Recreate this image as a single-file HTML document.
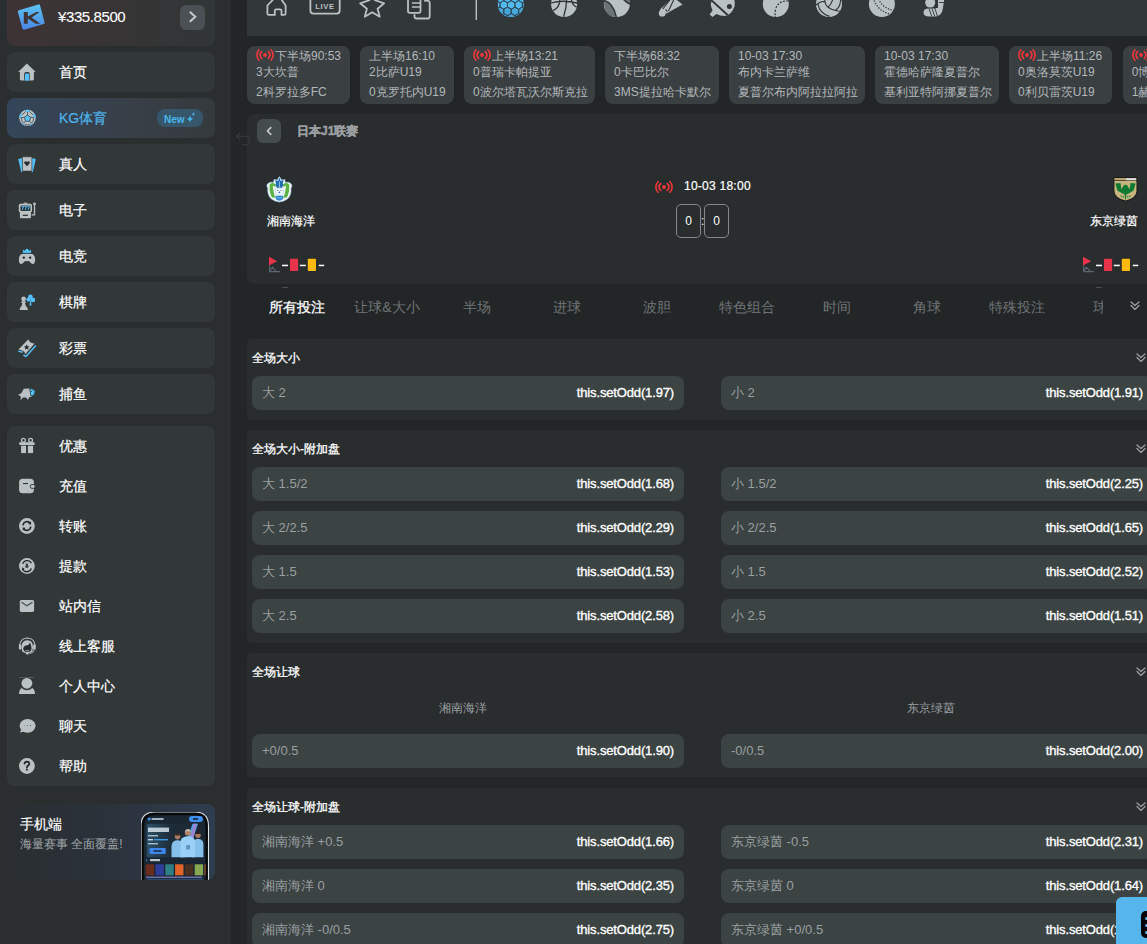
<!DOCTYPE html>
<html><head><meta charset="utf-8"><style>
*{box-sizing:border-box;margin:0;padding:0}
html,body{width:1147px;height:944px;overflow:hidden}
body{position:relative;background:#222627;font-family:"Liberation Sans",sans-serif;color:#fff}
.a{position:absolute}
#side{left:0;top:0;width:231px;height:944px;background:#2a2e2f}
.card{position:absolute;left:7px;width:208px;background:#323738;border-radius:8px;overflow:hidden}
.mi{position:absolute;left:7px;width:208px;height:40px;background:#323738;border-radius:8px}
.mi .t,.gi .t{position:absolute;left:52px;top:11px;font-size:14px;line-height:18px;color:#fff;white-space:nowrap;-webkit-text-stroke:0.2px currentColor}
.ic{position:absolute;left:11px;top:11px;width:18px;height:18px}
.gi{position:absolute;left:0;width:208px;height:40px}
.mc{position:absolute;top:46px;height:58px;background:#3a3f42;border-radius:8px;color:#b3b8ba;font-size:12px;line-height:16px;white-space:nowrap;overflow:hidden}
.mc div{position:absolute;left:9px}
.mc .l1{top:49px}
.mc .l1{top:2px} .mc .l2{top:18px} .mc .l3{top:37.5px}
.mc svg.live{display:inline-block;vertical-align:top;margin:1px 1px 0 0}
.panel{position:absolute;left:247px;width:930px;background:#292d2e;border-radius:8px}
.sec{position:absolute;left:247px;width:916px;background:#292d2e;border-radius:5px}
.sec .tt{position:absolute;left:5px;top:12px;font-size:12px;line-height:14px;color:#fff;-webkit-text-stroke:0.3px #fff}
.chev{position:absolute;width:10px;height:9px}
.btn{position:absolute;height:34px;width:432px;background:#3b4343;border-radius:8px;font-size:13px;line-height:34px;white-space:nowrap}
.btn .k{position:absolute;left:10px;top:0;color:#9a9fa1}
.btn .v{position:absolute;right:10px;top:0;color:#fff;font-size:13px;letter-spacing:-0.15px;-webkit-text-stroke:0.35px #fff}
.tab{position:absolute;top:299px;width:90px;text-align:center;font-size:14px;line-height:16px;color:#707476;white-space:nowrap}
</style></head><body>
<svg width="0" height="0" style="position:absolute"><defs>
<g id="liveic"><circle cx="9" cy="6" r="1.9" fill="#f0383a"/>
<path d="M5.6 2.6a4.6 4.6 0 0 0 0 6.8M12.4 2.6a4.6 4.6 0 0 1 0 6.8" stroke="#f0383a" stroke-width="1.8" fill="none" stroke-linecap="round"/>
<path d="M3 0.8a7.5 7.5 0 0 0 0 10.4M15 0.8a7.5 7.5 0 0 1 0 10.4" stroke="#f0383a" stroke-width="1.6" fill="none" stroke-linecap="round"/></g>
<g id="dchev"><path d="M1 1l4 3.5l4-3.5M1 4.5l4 4l4-4" stroke="#9a9e9f" stroke-width="1.3" fill="none" stroke-linecap="round" stroke-linejoin="round"/></g>
</defs></svg>
<div id="side" class="a">
<div class="card" style="top:-11px;height:56.5px;background:linear-gradient(90deg,#3d3334 0%,#383435 45%,#313637 100%)"></div>
<svg class="a" style="left:12px;top:0" width="40" height="36" viewBox="0 0 40 36"><defs><linearGradient id="kg" x1="0" y1="0" x2="0" y2="1"><stop offset="0" stop-color="#5cc4f0"/><stop offset="1" stop-color="#4a86e6"/></linearGradient></defs><path d="M6.8 10.2Q5.5 10.6 5.8 12L10.5 28.7Q10.9 30 12.2 29.7L31.6 24.1Q32.9 23.7 32.6 22.4L28 5.3Q27.6 4 26.3 4.4Z" fill="url(#kg)"/><path d="M11.8 12H15.8V16.6L24.4 12.1H27.6L19.6 17.4L28.2 23.7H23.7L15.8 18.6V23.7H11.8Z" fill="#3f3536"/></svg>
<div class="a" style="left:58px;top:8px;font-size:15px;line-height:18px;color:#fff;letter-spacing:-0.4px;-webkit-text-stroke:0.1px #fff">¥335.8500</div>
<div class="a" style="left:180px;top:5px;width:25px;height:25px;border-radius:6px;background:#4a5053"><svg class="a" style="left:0;top:0" width="25" height="25" viewBox="0 0 25 25"><path d="M9.8 6.8L15.3 11.8L9.8 16.8" stroke="#c4cbcd" stroke-width="2" fill="none"/></svg></div>
<div class="mi" style="top:52px"><svg class="a" style="left:5px;top:6px" width="30" height="30" viewBox="0 0 30 30"><path d="M14.9 5.6L6.6 13.4Q6.2 14.1 7 14.1H7.9V21Q7.9 22.6 9.5 22.6H20.3Q21.9 22.6 21.9 21V14.1H22.8Q23.6 14.1 23.2 13.4Z" fill="#bac2c5"/><rect x="12.2" y="14.1" width="5.6" height="8.9" rx="2" fill="#2f3435"/><rect x="13" y="15.5" width="4.2" height="7.2" rx="1" fill="#55c1fa"/></svg><div class="t">首页</div></div>
<div class="mi" style="top:98px;background:linear-gradient(90deg,#34465a 0%,#383f47 60%,#353a3d 100%)"><svg class="a" style="left:5px;top:6px" width="30" height="30" viewBox="0 0 30 30"><circle cx="15.5" cy="13.9" r="8.2" fill="#bac2c5"/><path d="M13.2 6.1Q15.5 5.3 17.8 6.1L17.2 7.4L15.5 8.1L13.8 7.4Z" fill="#55c1fa"/><path d="M7.5 11.6Q8.2 9.9 9.4 8.9L10 10.8L9.3 13.6L7.6 13.8Z M23.5 11.6Q22.8 9.9 21.6 8.9L21 10.8L21.7 13.6L23.4 13.8Z M9.9 19.6L11.6 19.2L12.6 20.6L12.4 21.6Q10.9 20.8 9.9 19.6Z M21.1 19.6L19.4 19.2L18.4 20.6L18.6 21.6Q20.1 20.8 21.1 19.6Z" fill="#55c1fa"/><path d="M15.5 8.1V11M13.8 7.4L10 10.8M17.2 7.4L21 10.8M12.4 13.3L9.3 13.6M18.6 13.3L21.7 13.6M13.5 17.3L11.6 19.2M17.5 17.3L19.4 19.2M9.3 13.6L9.9 17.2L11.6 19.2M21.7 13.6L21.1 17.2L19.4 19.2M12.6 20.6Q15.5 21.4 18.4 20.6" stroke="#2a2f33" stroke-width="0.7" fill="none"/><path d="M15.5 11L18.6 13.3L17.5 17.3H13.5L12.4 13.3Z" fill="#55c1fa" stroke="#2a2f33" stroke-width="0.7"/></svg><div class="t" style="color:#4fb3ea">KG体育</div><div class="a" style="left:150px;top:11px;width:46px;height:18px;border-radius:8px;background:#36576b"><span class="a" style="left:7px;top:4.5px;font-size:10px;line-height:12px;font-weight:bold;color:#4ab6ec">New</span><svg class="a" style="left:29px;top:2px" width="12" height="12" viewBox="0 0 12 12"><path d="M4 4.8L5 7L7.2 8L5 9L4 11.2L3 9L0.8 8L3 7Z" fill="#4ab6ec"/><path d="M7.3 1.2L7.9 2.5L9.2 3.1L7.9 3.7L7.3 5L6.7 3.7L5.4 3.1L6.7 2.5Z" fill="#4ab6ec"/></svg></div></div>
<div class="mi" style="top:144px"><svg class="a" style="left:5px;top:6px" width="30" height="30" viewBox="0 0 30 30"><path d="M6.2 9.1L10.4 8.1V22L9.2 22.2Z M19.6 8.1L23.8 9.1L20.8 22.2L19.6 22Z" fill="#55c1fa"/><rect x="10.4" y="6.8" width="9.5" height="14.3" rx="0.6" fill="#bac2c5" stroke="#2f3435" stroke-width="0.6"/><path d="M15 16.2L12.4 13.4Q11.6 11.8 13.2 11.3Q14.4 11.1 15 12.3Q15.6 11.1 16.8 11.3Q18.4 11.8 17.6 13.4Z" fill="#2a2e30"/></svg><div class="t">真人</div></div>
<div class="mi" style="top:190px"><svg class="a" style="left:5px;top:6px" width="30" height="30" viewBox="0 0 30 30"><path d="M11.1 7.8Q11.5 6.5 13.5 6.5Q15.5 6.5 15.9 7.8Z" fill="#bac2c5"/><rect x="6.8" y="7.7" width="13.2" height="8.6" rx="1.6" fill="#bac2c5"/><rect x="7.9" y="15.6" width="11" height="6.6" rx="0.6" fill="#bac2c5"/><rect x="8.5" y="9.6" width="9.9" height="5.3" fill="#25292b"/><path d="M9.4 10.6h2.2l-1.3 3.4M12.3 10.6h2.2l-1.3 3.4M15.2 10.6h2.2l-1.3 3.4" stroke="#55c1fa" stroke-width="1" fill="none"/><rect x="10.8" y="18.7" width="5.1" height="1.2" fill="#25292b"/><circle cx="22.5" cy="7.9" r="1.4" fill="#bac2c5"/><path d="M22.5 8.5V18.9H19.6" stroke="#bac2c5" stroke-width="1.3" fill="none"/></svg><div class="t">电子</div></div>
<div class="mi" style="top:236px"><svg class="a" style="left:5px;top:6px" width="30" height="30" viewBox="0 0 30 30"><path d="M10.3 12Q7.2 12.4 6.9 17Q6.7 21.8 9.4 21.9Q11 21.9 12.3 19.6Q13.2 18.9 15 18.9Q16.8 18.9 17.7 19.6Q19 21.9 20.6 21.9Q23.3 21.8 23.1 17Q22.8 12.4 19.7 12Q17.5 10.9 15 10.9Q12.5 10.9 10.3 12Z" fill="#bac2c5"/><circle cx="11.8" cy="15.6" r="1.2" fill="#222"/><circle cx="18.1" cy="15.6" r="1.2" fill="#222"/><path d="M10.4 11.4L10.4 6.8L12.4 8.3L15 5.9L17.6 8.3L19.5 6.8L19.5 11.4Z" fill="#55c1fa" stroke="#2f3435" stroke-width="0.9"/></svg><div class="t">电竞</div></div>
<div class="mi" style="top:282px"><svg class="a" style="left:5px;top:6px" width="30" height="30" viewBox="0 0 30 30"><circle cx="11.6" cy="10.9" r="2.3" fill="#bac2c5"/><path d="M9.9 13.2H13.3L14.2 15L12.9 15.1L14 18.2Q15.9 19.2 15.9 21.9H7.6Q7.6 19.2 9.5 18.2L10.4 15.1L9.1 15Z" fill="#bac2c5"/><circle cx="18.4" cy="8.7" r="2.3" fill="#55c1fa"/><circle cx="16.4" cy="11.6" r="2.1" fill="#55c1fa"/><circle cx="20.9" cy="11.9" r="2.3" fill="#55c1fa"/><path d="M18.4 10.5L19.6 17.4H17.4Z" fill="#55c1fa"/></svg><div class="t">棋牌</div></div>
<div class="mi" style="top:328px"><svg class="a" style="left:5px;top:6px" width="30" height="30" viewBox="0 0 30 30"><path d="M6.3 17.1L10.6 18.3M11.4 20.9L13.9 22.5L23.9 11.4" stroke="#55c1fa" stroke-width="1.5" fill="none" stroke-linejoin="round"/><path d="M16.4 5.2Q16.7 7.3 18.7 8.4Q20.6 9.3 22.6 9.5L13.3 20.3Q13 18.5 11.5 17.3Q9.5 16.1 6.5 15.6Z" fill="#bac2c5"/><path d="M14.7 10.6l0.9 1.6 1.8.3-1.3 1.3.3 1.8-1.7-.8-1.7.8.3-1.8-1.3-1.3 1.8-.3z" fill="#26292b"/></svg><div class="t">彩票</div></div>
<div class="mi" style="top:374px"><svg class="a" style="left:5px;top:6px" width="30" height="30" viewBox="0 0 30 30"><path d="M11.8 8.8L17.4 8.6L18.6 15.5L20 16.5L17.2 17.2L16 20L14.2 17.4L11 17.4L8.6 20.2L8.8 16.5L6 14.5L9.2 13.6Z" fill="#bac2c5"/><path d="M17.9 8.6Q21.8 8.8 23 11.6Q23.2 14.3 20.6 16L18.6 15.4Z" fill="#55c1fa" stroke="#2f3435" stroke-width="0.6"/><circle cx="19.6" cy="11.5" r="0.5" fill="#234"/></svg><div class="t">捕鱼</div></div>
<div class="card" style="top:426px;height:360px">
<div class="gi" style="top:0px"><svg class="a" style="left:5px;top:6px" width="30" height="30" viewBox="0 0 30 30"><circle cx="11.4" cy="8.2" r="1.9" fill="none" stroke="#bac2c5" stroke-width="1.3"/><circle cx="18.6" cy="8.2" r="1.9" fill="none" stroke="#bac2c5" stroke-width="1.3"/><rect x="7.1" y="10.3" width="15.6" height="2.6" rx="0.8" fill="#bac2c5"/><rect x="9.1" y="13.7" width="4.9" height="7.4" fill="#bac2c5"/><rect x="15.9" y="13.7" width="5.2" height="7.4" fill="#bac2c5"/></svg><div class="t">优惠</div></div>
<div class="gi" style="top:40px"><svg class="a" style="left:5px;top:6px" width="30" height="30" viewBox="0 0 30 30"><rect x="7.1" y="6.8" width="14.8" height="14.5" rx="3.6" fill="#bac2c5"/><rect x="11" y="11" width="4.9" height="1.1" fill="#2c3032"/><rect x="18.2" y="12.5" width="5" height="3.9" rx="1.8" fill="#bac2c5" stroke="#2f3435" stroke-width="0.9"/></svg><div class="t">充值</div></div>
<div class="gi" style="top:80px"><svg class="a" style="left:5px;top:6px" width="30" height="30" viewBox="0 0 30 30"><circle cx="14.9" cy="14" r="7.9" fill="#bac2c5"/><path d="M11.1 13.6A3.9 3.9 0 0 1 18.3 11.5M18.7 14.4A3.9 3.9 0 0 1 11.5 16.5" stroke="#25292b" stroke-width="1.5" fill="none"/><path d="M19 9.2L19.2 12.6L16.1 12.2Z M10.8 18.8L10.6 15.4L13.7 15.8Z" fill="#25292b"/></svg><div class="t">转账</div></div>
<div class="gi" style="top:120px"><svg class="a" style="left:5px;top:6px" width="30" height="30" viewBox="0 0 30 30"><circle cx="14.9" cy="14" r="7.9" fill="#bac2c5"/><path d="M10.7 11.8A4.7 4.7 0 0 1 19.4 11.2M19.3 16.3A4.7 4.7 0 0 1 10.4 16.8" stroke="#25292b" stroke-width="1.3" fill="none"/><path d="M10.1 15.3L10.2 18.2L12.6 16.8Z" fill="#25292b"/><path d="M13.6 11L14.9 12L16.2 11L15.9 12.9Q17.1 14.2 16.3 15.6Q14.9 16.5 13.5 15.6Q12.7 14.2 13.9 12.9Z" fill="#3a3e40"/></svg><div class="t">提款</div></div>
<div class="gi" style="top:160px"><svg class="a" style="left:5px;top:6px" width="30" height="30" viewBox="0 0 30 30"><rect x="7.8" y="7.9" width="14.3" height="12" rx="1.6" fill="#bac2c5"/><path d="M9.9 10.5L14.9 13.7L20 10.5" stroke="#4a4f51" stroke-width="1.3" fill="none" stroke-linecap="round"/></svg><div class="t">站内信</div></div>
<div class="gi" style="top:200px"><svg class="a" style="left:5px;top:6px" width="30" height="30" viewBox="0 0 30 30"><path d="M7.6 15.5Q7.2 6.2 15.3 6Q23.4 6.2 23 15.5" stroke="#bac2c5" stroke-width="1.1" fill="none"/><rect x="6.9" y="12.2" width="2.6" height="5.4" rx="1.2" fill="#bac2c5"/><rect x="21.1" y="12.2" width="2.6" height="5.4" rx="1.2" fill="#bac2c5"/><path d="M9.6 15.5Q9.2 8.4 15.3 8.2Q21.4 8.4 21 15.5L20.4 19.5Q18.6 21.2 15.3 21.2Q12 21.2 10.2 19.5Z" fill="#bac2c5"/><path d="M11.2 16.2Q12 13.2 15.6 13.2Q17.4 12.6 17.9 10.6Q19.6 13.6 19.6 16.4Q19.3 20 15.3 20.2Q11.6 20 11.2 16.2Z" fill="#272b2d"/><path d="M13.4 18.6Q15.3 19.3 17.2 18.6" stroke="#bac2c5" stroke-width="0.9" fill="none"/><path d="M22.4 17.4Q22 20.8 17.6 21.6" stroke="#bac2c5" stroke-width="0.9" fill="none"/><ellipse cx="15.4" cy="21.6" rx="1.6" ry="1" fill="#bac2c5"/></svg><div class="t">线上客服</div></div>
<div class="gi" style="top:240px"><svg class="a" style="left:5px;top:6px" width="30" height="30" viewBox="0 0 30 30"><rect x="7.3" y="5.1" width="14.9" height="0.6" fill="#6d7476"/><circle cx="14.9" cy="11.3" r="5.4" fill="#bac2c5"/><path d="M9.6 15.9Q12 18.2 14.9 18.2Q17.8 18.2 20.4 15.9Q22.9 17.3 23 21.9H7Q7.1 17.3 9.6 15.9Z" fill="#bac2c5"/></svg><div class="t">个人中心</div></div>
<div class="gi" style="top:280px"><svg class="a" style="left:5px;top:6px" width="30" height="30" viewBox="0 0 30 30"><ellipse cx="15.6" cy="13.8" rx="8" ry="6.9" fill="#bac2c5"/><path d="M9.4 17.2L7.8 20.4L12.4 19.6Z" fill="#bac2c5"/><circle cx="12.6" cy="13.6" r="0.45" fill="#555"/><circle cx="15.4" cy="13.8" r="0.5" fill="#444"/><circle cx="18.5" cy="13.6" r="0.5" fill="#333"/></svg><div class="t">聊天</div></div>
<div class="gi" style="top:320px"><svg class="a" style="left:5px;top:6px" width="30" height="30" viewBox="0 0 30 30"><circle cx="14.9" cy="14" r="7.9" fill="#bac2c5"/><path d="M12.5 11.6Q12.8 9.6 14.9 9.6Q17.3 9.7 17.3 11.6Q17.2 13 15.9 13.8Q14.9 14.4 14.9 15.6" stroke="#222628" stroke-width="1.7" fill="none" stroke-linecap="round"/><circle cx="14.9" cy="17.8" r="1" fill="#222628"/></svg><div class="t">帮助</div></div>
</div>
<div class="card" style="top:804px;height:76px;background:linear-gradient(90deg,#2a2e31 0%,#2b323b 50%,#2e3d4f 100%)"><div class="a" style="left:13px;top:12px;font-size:14px;line-height:16px;color:#fff;-webkit-text-stroke:0.15px #fff">手机端</div><div class="a" style="left:13px;top:33px;font-size:12px;line-height:14px;color:#a3a8ab;white-space:nowrap">海量赛事 全面覆盖!</div><svg class="a" style="left:134px;top:8px" width="70" height="70" viewBox="0 0 70 70"><path d="M0 72V14Q0 0 14 0H54Q67.5 0 67.5 14V72" fill="#07090b" stroke="#dfe2e4" stroke-width="1.1"/><path d="M3 72V15Q3 3.2 14.5 3.2H53.5Q64.5 3.2 64.5 15V72Z" fill="#1a2632"/><circle cx="8.2" cy="7" r="1.6" fill="#3d8fe6"/><rect x="10.6" y="6" width="12" height="2" fill="#9fb2c2"/><rect x="48" y="4" width="14" height="6" rx="3" fill="#3f8ef0"/><rect x="52" y="6.2" width="5" height="1.6" fill="#123"/><defs><linearGradient id="bn" x1="0" y1="0" x2="1" y2="0"><stop offset="0" stop-color="#2b5168"/><stop offset="0.45" stop-color="#1d2c38"/><stop offset="1" stop-color="#1c2631"/></linearGradient></defs><rect x="5.7" y="11.8" width="54.8" height="33.4" rx="1.2" fill="url(#bn)"/><path d="M40 45.2L51.5 11.8H57L45.5 45.2Z" fill="#4aa8e0"/><path d="M52.6 11.8H56L51 32H48Z" fill="#9a86d8"/><path d="M30.5 45.2V34Q31 29.5 34.5 28.6L36.6 28.2L38.8 28.6Q42 29.5 42.3 34V45.2Z" fill="#86c0ea"/><circle cx="36.6" cy="24.6" r="2.8" fill="#a87a62"/><path d="M33.9 23.4Q34.2 21.2 36.6 21.2Q39 21.2 39.3 23.4Z" fill="#3a2a22"/><path d="M51 45.2V32Q51.5 28 55 27.2L57 26.8L59 27.2Q62 28 62.4 32V45.2Z" fill="#86c0ea"/><circle cx="57" cy="23.2" r="2.7" fill="#a87a62"/><path d="M54.4 22Q54.7 19.9 57 19.9Q59.3 19.9 59.6 22Z" fill="#2a201a"/><path d="M39.5 45.2V30Q40 25.5 44.5 24.6L47 24.2L49.5 24.6Q53.5 25.5 54 30V45.2Z" fill="#9ad0f6"/><circle cx="47" cy="20.4" r="3.2" fill="#b08468"/><path d="M44 19.6Q44.2 17 47 17Q49.8 17 50 19.6Z" fill="#b9b0a8"/><path d="M45.2 33h3.8v4.4h-3.8z" fill="#3a6a9a" opacity="0.6"/><rect x="7" y="15.6" width="21" height="4.4" fill="#d8e4ee" opacity="0.85"/><rect x="7" y="23" width="10" height="1.4" fill="#a9bccb"/><rect x="7" y="27" width="5" height="1.4" fill="#c9d6e0"/><rect x="13" y="27" width="14" height="1.4" fill="#3f9ae0"/><rect x="7" y="31" width="10" height="1.4" fill="#a9bccb"/><rect x="8.5" y="36" width="16.2" height="6" rx="1" fill="#3e86ec"/><rect x="12.5" y="38.3" width="8" height="1.4" fill="#123"/><path d="M5.2 47.2l1.6 1-1.6 1z" fill="#3f9ae0"/><rect x="9" y="47" width="10" height="2.2" fill="#b8c4ce"/><rect x="4.7" y="52.3" width="8.4" height="11" fill="#6a2c1c"/><rect x="14.5" y="52.3" width="8.4" height="11" fill="#2e3c9a"/><rect x="24.3" y="52.3" width="8.4" height="11" fill="#2f7f86"/><rect x="34.1" y="52.3" width="8.4" height="11" fill="#e2642a"/><rect x="43.9" y="52.3" width="8.4" height="11" fill="#4a3020"/><rect x="53.7" y="52.3" width="8.4" height="11" fill="#86a850"/><rect x="63.5" y="52.3" width="1" height="11" fill="#b06030"/><rect x="5" y="64.5" width="56" height="1.6" fill="#6c6fa8"/><rect x="6" y="67.6" width="56" height="1.2" fill="#3f7fc8"/></svg></div>
</div>
<div class="a" style="left:247px;top:-10px;width:920px;height:46px;background:#323839"></div>
<svg class="a" style="left:247px;top:0" width="900" height="36" viewBox="247 0 900 36">
<g fill="none" stroke="#b9c1c4" stroke-width="1.8" stroke-linejoin="round">
<path d="M278 -5.5L267.4 5.5V13.4Q267.4 14.9 268.9 14.9H274.8V10.8Q274.8 9.4 276.2 9.4H280.1Q281.5 9.4 281.5 10.8V14.9H284.2Q285.6 14.9 285.6 13.4V5.5Z"/>
<rect x="310.4" y="-6" width="29.3" height="19.6" rx="3"/>
<path d="M372.2 -6.5L375 0.2L384.1 3.3L377.6 8.7L379.7 16.7L372.2 12.2L364.8 16.7L366.9 8.7L360.2 3.3L369.4 0.2Z"/>
<path d="M420.5 -3V11Q420.5 12.9 418.6 12.9H409.9Q408 12.9 408 11V-3"/>
<path d="M424.2 0.8Q429.7 0.2 429.7 2.5V16.6Q429.7 18.5 427.8 18.5H416.3Q414.5 18.5 414.5 16.6V14.3"/>
<path d="M411.9 3H420M411.9 7H420" stroke-width="1.6"/>
</g>
<text x="325" y="8.9" font-size="7.6" font-weight="bold" fill="#b9c1c4" text-anchor="middle" font-family="Liberation Sans" letter-spacing="0.6">LIVE</text>
<rect x="475.6" y="-2" width="1.4" height="22" fill="#b9c1c4"/>
<g><defs><clipPath id="sc"><circle cx="510.8" cy="4" r="13"/></clipPath></defs>
<circle cx="510.8" cy="4" r="13" fill="#52b9ee"/>
<g clip-path="url(#sc)"><path d="M500.03 15.65L496.30 13.50L496.30 9.20L500.03 7.05L503.75 9.20L503.75 13.50ZM507.48 15.65L503.75 13.50L503.75 9.20L507.48 7.05L511.20 9.20L511.20 13.50ZM514.92 15.65L511.20 13.50L511.20 9.20L514.92 7.05L518.65 9.20L518.65 13.50ZM522.37 15.65L518.65 13.50L518.65 9.20L522.37 7.05L526.10 9.20L526.10 13.50ZM503.75 22.10L500.03 19.95L500.03 15.65L503.75 13.50L507.48 15.65L507.48 19.95ZM511.20 22.10L507.48 19.95L507.48 15.65L511.20 13.50L514.92 15.65L514.92 19.95ZM518.65 22.10L514.92 19.95L514.92 15.65L518.65 13.50L522.37 15.65L522.37 19.95Z" fill="#47a6d8"/><path d="M503.75 -3.70L500.03 -5.85L500.03 -10.15L503.75 -12.30L507.48 -10.15L507.48 -5.85ZM511.20 -3.70L507.48 -5.85L507.48 -10.15L511.20 -12.30L514.92 -10.15L514.92 -5.85ZM518.65 -3.70L514.92 -5.85L514.92 -10.15L518.65 -12.30L522.37 -10.15L522.37 -5.85ZM500.03 2.75L496.30 0.60L496.30 -3.70L500.03 -5.85L503.75 -3.70L503.75 0.60ZM507.48 2.75L503.75 0.60L503.75 -3.70L507.48 -5.85L511.20 -3.70L511.20 0.60ZM514.92 2.75L511.20 0.60L511.20 -3.70L514.92 -5.85L518.65 -3.70L518.65 0.60ZM522.37 2.75L518.65 0.60L518.65 -3.70L522.37 -5.85L526.10 -3.70L526.10 0.60ZM496.30 9.20L492.58 7.05L492.58 2.75L496.30 0.60L500.03 2.75L500.03 7.05ZM503.75 9.20L500.03 7.05L500.03 2.75L503.75 0.60L507.48 2.75L507.48 7.05ZM511.20 9.20L507.48 7.05L507.48 2.75L511.20 0.60L514.92 2.75L514.92 7.05ZM518.65 9.20L514.92 7.05L514.92 2.75L518.65 0.60L522.37 2.75L522.37 7.05ZM526.10 9.20L522.37 7.05L522.37 2.75L526.10 0.60L529.82 2.75L529.82 7.05ZM500.03 15.65L496.30 13.50L496.30 9.20L500.03 7.05L503.75 9.20L503.75 13.50ZM507.48 15.65L503.75 13.50L503.75 9.20L507.48 7.05L511.20 9.20L511.20 13.50ZM514.92 15.65L511.20 13.50L511.20 9.20L514.92 7.05L518.65 9.20L518.65 13.50ZM522.37 15.65L518.65 13.50L518.65 9.20L522.37 7.05L526.10 9.20L526.10 13.50ZM503.75 22.10L500.03 19.95L500.03 15.65L503.75 13.50L507.48 15.65L507.48 19.95ZM511.20 22.10L507.48 19.95L507.48 15.65L511.20 13.50L514.92 15.65L514.92 19.95ZM518.65 22.10L514.92 19.95L514.92 15.65L518.65 13.50L522.37 15.65L522.37 19.95Z" fill="none" stroke="#2b4452" stroke-width="0.9"/></g></g>
<g>
<circle cx="564.1" cy="4" r="13" fill="#b9c1c4"/>
<path d="M551 3Q563 -0.5 577 3M566.2 -6Q567.6 5 563.6 16.8M559.8 -2Q560.2 7.5 553.2 10.6M571.2 -2Q571.4 4.5 576.6 7.2" stroke="#2f3435" stroke-width="1.3" fill="none"/>
</g>
<g>
<circle cx="616.8" cy="4" r="13" fill="#b9c1c4"/>
<path d="M604.2 1Q613 3 615.9 16.5L612 17Q605 13 604 5Z" fill="#6c7376"/>
<path d="M620 -9Q622 0 629.6 3.5L630 -4Z" fill="#6c7376"/>
<path d="M604 0.5Q613 2.5 616.3 16.8M619.5 -9.5Q621.5 0.5 630 4" stroke="#2f3435" stroke-width="1.5" fill="none"/>
</g>
<g>
<path d="M660 9.5L673 -3L682.5 4.5Q677 7.5 666.5 13.5Z" fill="#b9c1c4"/>
<circle cx="662.2" cy="13.2" r="3.4" fill="#b9c1c4"/>
<path d="M668.5 11L675 -3M665.5 9.5L667.5 11.6M662.8 8.8L673 -4" stroke="#2f3435" stroke-width="1.1" fill="none"/>
</g>
<g>
<path d="M712 0.5Q709.5 5 712.6 10.2L709.6 14.4L712.5 17.1L716.4 14Q720 16 725 16Q732 14.5 734.6 6Q735.5 -2 730 -8L716 -5Z" fill="#b9c1c4"/>
<path d="M711.8 0.6L727.6 15" stroke="#2f3435" stroke-width="1.9"/>
<circle cx="729.4" cy="6.6" r="2.5" fill="#2f3435"/>
</g>
<g>
<circle cx="775.8" cy="4" r="13" fill="#b9c1c4"/>
<path d="M788.5 1Q779 0 775.5 9Q774.5 14 775.5 17M762.5 -1Q767 0 770 -3.5" stroke="#2f3435" stroke-width="1.2" stroke-dasharray="2 1.4" fill="none"/>
</g>
<g>
<circle cx="829" cy="4" r="13" fill="#b9c1c4"/>
<path d="M815.9 5.2Q819 1.8 824.6 1.4M824.6 -3Q824.5 4.5 828.1 7.3Q833 10.8 839.8 11.2M828.1 7.3Q831.5 4 832.9 -1M818 4.2Q819.5 13.5 829.5 16.4M840.7 -1Q840.5 7.5 835.1 10.6" stroke="#2f3435" stroke-width="1.1" fill="none"/>
</g>
<g>
<circle cx="881.9" cy="4" r="13" fill="#b9c1c4"/>
<path d="M872.5 -5Q875.5 10 889.5 14M876.5 -6.5Q880 8 894 10.5" stroke="#2f3435" stroke-width="1.3" stroke-dasharray="1.3 1.5" fill="none"/>
</g>
<g>
<circle cx="930.2" cy="2.6" r="5" fill="#b9c1c4"/>
<path d="M937.8 -8H945.5L942.5 10.5Q941 15.5 936 16.5H929Q923.5 16.5 923.5 12.5Q923.5 8.5 929 8.5H936Z" fill="#b9c1c4"/>
<path d="M939 2.5H944.5M929 8.5L931.8 16.5M932 8.5L934.8 16.5M935 8.5L937.5 16.5" stroke="#2f3435" stroke-width="0.9"/>
<rect x="936" y="0" width="2" height="8" fill="#2f3435"/>
</g>
</svg>
<div class="mc" style="left:247px;width:103.0px"><div class="l1"><svg class="live" viewBox="0 0 18 12" width="18" height="12"><use href="#liveic"/></svg>下半场90:53</div><div class="l2">3大坎普</div><div class="l3">2科罗拉多FC</div></div>
<div class="mc" style="left:360px;width:93.5px"><div class="l1">上半场16:10</div><div class="l2">2比萨U19</div><div class="l3">0克罗托内U19</div></div>
<div class="mc" style="left:464px;width:131.0px"><div class="l1"><svg class="live" viewBox="0 0 18 12" width="18" height="12"><use href="#liveic"/></svg>上半场13:21</div><div class="l2">0普瑞卡帕提亚</div><div class="l3">0波尔塔瓦沃尔斯克拉</div></div>
<div class="mc" style="left:605px;width:113.6px"><div class="l1">下半场68:32</div><div class="l2">0卡巴比尔</div><div class="l3">3MS提拉哈卡默尔</div></div>
<div class="mc" style="left:729px;width:135.5px"><div class="l1">10-03 17:30</div><div class="l2">布内卡兰萨维</div><div class="l3">夏普尔布内阿拉拉阿拉</div></div>
<div class="mc" style="left:875px;width:123.5px"><div class="l1">10-03 17:30</div><div class="l2">霍德哈萨隆夏普尔</div><div class="l3">基利亚特阿挪夏普尔</div></div>
<div class="mc" style="left:1009px;width:102.7px"><div class="l1"><svg class="live" viewBox="0 0 18 12" width="18" height="12"><use href="#liveic"/></svg>上半场11:26</div><div class="l2">0奥洛莫茨U19</div><div class="l3">0利贝雷茨U19</div></div>
<div class="mc" style="left:1122.8px;width:127.2px"><div class="l1"><svg class="live" viewBox="0 0 18 12" width="18" height="12"><use href="#liveic"/></svg>上半场11:26</div><div class="l2">0博伊斯</div><div class="l3">1赫拉德茨</div></div>
<div class="panel" style="top:114px;height:169.5px"></div>
<div class="a" style="left:257px;top:119px;width:24px;height:24px;background:#454c4d;border-radius:6px"><svg width="24" height="24" style="position:absolute;left:0;top:0"><path d="M13.8 8.6l-3.4 3.4l3.4 3.4" stroke="#c4c8ca" stroke-width="1.7" fill="none" stroke-linecap="round" stroke-linejoin="round"/></svg></div>
<div class="a" style="left:297px;top:123px;font-size:12px;line-height:16px;font-weight:bold;color:#9a9ea0;-webkit-text-stroke:0.45px #9a9ea0">日本J1联赛</div>
<svg class="a" style="left:235px;top:131px" width="16" height="16" viewBox="0 0 16 16"><path d="M5 2L1.5 5.3L5 8.6M1.8 5.3H10Q14.5 5.3 14.5 9.5Q14.5 13.7 10 13.7H7" stroke="#373b3d" stroke-width="1.1" fill="none"/></svg>
<svg class="a" style="left:262px;top:172px" width="35" height="35" viewBox="0 0 35 35"><path d="M17.4 4.6L19.5 7.9L22.8 7.5L23.3 10.5Q27.6 9.4 29.7 12.5Q30.3 14.5 29 16.2Q29.7 23 25.5 26.9Q21.6 29.7 17.4 30Q13.2 29.7 9.3 26.9Q5.1 23 5.8 16.2Q4.5 14.5 5.1 12.5Q7.2 9.4 11.5 10.5L12 7.5L15.3 7.9Z" fill="#f2f7fb" stroke="#9fcbea" stroke-width="0.6"/><path d="M7.6 14.6Q6.8 11.4 10.2 10.9Q13.6 10.8 13.8 13.8L13.2 15.6Q12.4 13.4 10.8 14.2L11.8 20.5Q12.4 24.2 14 25.8L10 25.4Q7.2 21 7.6 14.6Z M27.2 14.6Q28 11.4 24.6 10.9Q21.2 10.8 21 13.8L21.6 15.6Q22.4 13.4 24 14.2L23 20.5Q22.4 24.2 20.8 25.8L24.8 25.4Q27.6 21 27.2 14.6Z" fill="#5fb53f"/><path d="M9.2 17.5l.6.6M9.8 20.5l.6.6M10.6 23l.6.6M25.6 17.5l-.6.6M25 20.5l-.6.6M24.2 23l-.6.6" stroke="#2d7fc0" stroke-width="0.7"/><path d="M17.4 5.6L18.7 9L21.6 8.1L20.7 11.8L21.6 12L20 15.8H14.8L13.2 12L14.1 11.8L13.2 8.1L16.1 9Z" fill="#1f6cb4"/><path d="M17.4 9.5V15.5" stroke="#f2f7fb" stroke-width="0.6"/><path d="M13.6 17Q17.4 15.2 21.2 17Q22.2 21.6 17.4 23.6Q12.6 21.6 13.6 17Z" fill="#fff" stroke="#8fb8dc" stroke-width="0.5"/><circle cx="15.8" cy="18.6" r="0.7" fill="#2a6db0"/><circle cx="19" cy="18.6" r="0.7" fill="#2a6db0"/><circle cx="17.4" cy="20.4" r="0.9" fill="#2a6db0"/><path d="M13.4 23.8H21.4L21 27.1Q19.2 28.6 17.4 28.7Q15.6 28.6 13.8 27.1Z" fill="#2f86d0"/><path d="M14.6 25.6Q17.4 26.6 20.2 25.6" stroke="#cfe6f7" stroke-width="0.5" fill="none"/></svg>
<svg class="a" style="left:1108px;top:172px" width="35" height="35" viewBox="0 0 35 35"><path d="M5.6 5.2H29.3V19Q29.3 26.5 17.5 29.5Q5.6 26.5 5.6 19Z" fill="#151515"/><path d="M6.4 9H28.5V19Q28.5 25.8 17.5 28.6Q6.4 25.8 6.4 19Z" fill="#c6b57e"/><path d="M6.4 6H28.5V8.4H6.4Z" fill="#b5a46c"/><path d="M18 6.2H28V8.2H18Z" fill="#ddd"/><path d="M7.4 11.4L12.5 11L13.4 17.2L16 13L17.5 12.8L19 13L21.6 17.2L22.5 11L27.6 11.4L25.6 18.6L21 21.2L18.4 22.4L17.9 27.6H17.1L16.6 22.4L14 21.2L9.4 18.6Z" fill="#0e7a31"/><path d="M12.8 23.4L13.6 25.2M22.2 23.4L21.4 25.2M15 23.8L15.4 25.6M20 23.8L19.6 25.6" stroke="#0e7a31" stroke-width="0.9"/></svg>
<svg class="a" style="left:265px;top:252px" width="60" height="25" viewBox="0 0 60 25"><path d="M4 4.8L12.2 9.3L4 13.6Z" fill="#e8334a"/><path d="M4.6 13.5V19.6H15M4.6 19.3L7.4 15.2L11.2 19.3" stroke="#5e6573" stroke-width="1.1" fill="none"/><rect x="17" y="12.7" width="6" height="1.5" fill="#fff"/><rect x="25" y="6.8" width="8.1" height="12.2" rx="0.8" fill="#e8334a"/><rect x="34.8" y="12.7" width="6" height="1.5" fill="#fff"/><rect x="42.8" y="6.8" width="8.2" height="12.2" rx="0.8" fill="#ffb80c"/><rect x="53.8" y="12.7" width="5.4" height="1.5" fill="#fff"/></svg>
<svg class="a" style="left:1079px;top:252px" width="60" height="25" viewBox="0 0 60 25"><path d="M4 4.8L12.2 9.3L4 13.6Z" fill="#e8334a"/><path d="M4.6 13.5V19.6H15M4.6 19.3L7.4 15.2L11.2 19.3" stroke="#5e6573" stroke-width="1.1" fill="none"/><rect x="17" y="12.7" width="6" height="1.5" fill="#fff"/><rect x="25" y="6.8" width="8.1" height="12.2" rx="0.8" fill="#e8334a"/><rect x="34.8" y="12.7" width="6" height="1.5" fill="#fff"/><rect x="42.8" y="6.8" width="8.2" height="12.2" rx="0.8" fill="#ffb80c"/><rect x="53.8" y="12.7" width="5.4" height="1.5" fill="#fff"/></svg>
<div class="a" style="left:282px;top:287px;width:6px;height:1px;background:#4a4f51"></div>
<div class="a" style="left:1096px;top:287px;width:6px;height:1px;background:#4a4f51"></div>
<div class="a" style="left:267px;top:212.5px;font-size:12px;line-height:16px;color:#fff;-webkit-text-stroke:0.2px #fff">湘南海洋</div>
<div class="a" style="left:1090px;top:212.5px;font-size:12px;line-height:16px;color:#fff;-webkit-text-stroke:0.2px #fff">东京绿茵</div>
<svg class="a" style="left:655px;top:181px" viewBox="0 0 18 12" width="18" height="12"><use href="#liveic"/></svg>
<div class="a" style="left:684px;top:178px;font-size:12px;line-height:16px;color:#fff;letter-spacing:0.25px;-webkit-text-stroke:0.2px #fff">10-03 18:00</div>
<div class="a" style="left:676px;top:204px;width:25px;height:34px;border:1px solid #85898b;border-radius:5px;font-size:12px;line-height:32px;text-align:center;color:#fff">0</div>
<div class="a" style="left:704px;top:204px;width:25px;height:34px;border:1px solid #85898b;border-radius:5px;font-size:12px;line-height:32px;text-align:center;color:#fff">0</div>
<div class="a" style="left:701px;top:213px;width:3px;font-size:12px;line-height:16px;color:#fff;text-align:center">:</div>
<div class="a" style="left:252px;top:283px;width:851px;height:56px;overflow:hidden">
<div class="tab" style="left:0px;top:16px;color:#fff;-webkit-text-stroke:0.3px #fff">所有投注</div>
<div class="tab" style="left:90px;top:16px;color:#707476">让球&大小</div>
<div class="tab" style="left:180px;top:16px;color:#707476">半场</div>
<div class="tab" style="left:270px;top:16px;color:#707476">进球</div>
<div class="tab" style="left:360px;top:16px;color:#707476">波胆</div>
<div class="tab" style="left:450px;top:16px;color:#707476">特色组合</div>
<div class="tab" style="left:540px;top:16px;color:#707476">时间</div>
<div class="tab" style="left:630px;top:16px;color:#707476">角球</div>
<div class="tab" style="left:720px;top:16px;color:#707476">特殊投注</div>
<div class="tab" style="left:810px;top:16px;color:#707476">球员</div>
</div>
<svg class="a chev" style="left:1130px;top:301px" viewBox="0 0 10 9"><use href="#dchev"/></svg>
<div class="sec" style="top:339px;height:81px"><div class="tt">全场大小</div></div>
<svg class="a chev" style="left:1136px;top:353px" viewBox="0 0 10 9"><use href="#dchev"/></svg>
<div class="btn" style="left:252px;top:376px"><span class="k">大 2</span><span class="v">this.setOdd(1.97)</span></div>
<div class="btn" style="left:721px;top:376px"><span class="k">小 2</span><span class="v">this.setOdd(1.91)</span></div>
<div class="sec" style="top:430px;height:213px"><div class="tt">全场大小-附加盘</div></div>
<svg class="a chev" style="left:1136px;top:444px" viewBox="0 0 10 9"><use href="#dchev"/></svg>
<div class="btn" style="left:252px;top:467px"><span class="k">大 1.5/2</span><span class="v">this.setOdd(1.68)</span></div>
<div class="btn" style="left:721px;top:467px"><span class="k">小 1.5/2</span><span class="v">this.setOdd(2.25)</span></div>
<div class="btn" style="left:252px;top:511px"><span class="k">大 2/2.5</span><span class="v">this.setOdd(2.29)</span></div>
<div class="btn" style="left:721px;top:511px"><span class="k">小 2/2.5</span><span class="v">this.setOdd(1.65)</span></div>
<div class="btn" style="left:252px;top:555px"><span class="k">大 1.5</span><span class="v">this.setOdd(1.53)</span></div>
<div class="btn" style="left:721px;top:555px"><span class="k">小 1.5</span><span class="v">this.setOdd(2.52)</span></div>
<div class="btn" style="left:252px;top:599px"><span class="k">大 2.5</span><span class="v">this.setOdd(2.58)</span></div>
<div class="btn" style="left:721px;top:599px"><span class="k">小 2.5</span><span class="v">this.setOdd(1.51)</span></div>
<div class="sec" style="top:653px;height:124px"><div class="tt">全场让球</div></div>
<svg class="a chev" style="left:1136px;top:667px" viewBox="0 0 10 9"><use href="#dchev"/></svg>
<div class="a" style="left:439px;top:701px;font-size:12px;line-height:14px;color:#9a9fa1">湘南海洋</div>
<div class="a" style="left:907px;top:701px;font-size:12px;line-height:14px;color:#9a9fa1">东京绿茵</div>
<div class="btn" style="left:252px;top:734px"><span class="k">+0/0.5</span><span class="v">this.setOdd(1.90)</span></div>
<div class="btn" style="left:721px;top:734px"><span class="k">-0/0.5</span><span class="v">this.setOdd(2.00)</span></div>
<div class="sec" style="top:788px;height:300px"><div class="tt">全场让球-附加盘</div></div>
<svg class="a chev" style="left:1136px;top:802px" viewBox="0 0 10 9"><use href="#dchev"/></svg>
<div class="btn" style="left:252px;top:825px"><span class="k">湘南海洋 +0.5</span><span class="v">this.setOdd(1.66)</span></div>
<div class="btn" style="left:721px;top:825px"><span class="k">东京绿茵 -0.5</span><span class="v">this.setOdd(2.31)</span></div>
<div class="btn" style="left:252px;top:869px"><span class="k">湘南海洋 0</span><span class="v">this.setOdd(2.35)</span></div>
<div class="btn" style="left:721px;top:869px"><span class="k">东京绿茵 0</span><span class="v">this.setOdd(1.64)</span></div>
<div class="btn" style="left:252px;top:913px"><span class="k">湘南海洋 -0/0.5</span><span class="v">this.setOdd(2.75)</span></div>
<div class="btn" style="left:721px;top:913px"><span class="k">东京绿茵 +0/0.5</span><span class="v">this.setOdd(1.56)</span></div>
<div class="a" style="left:1116px;top:897px;width:50px;height:60px;background:#56b5ea;border-radius:6px"><div class="a" style="left:25px;top:14px;width:20px;height:27px;background:#000;border-radius:5px"><div class="a" style="left:3.5px;top:5.5px;width:3px;height:3px;border-radius:2px;background:#56b5ea"></div><div class="a" style="left:3.5px;top:12.5px;width:3px;height:3px;border-radius:2px;background:#56b5ea"></div><div class="a" style="left:3.5px;top:19.5px;width:3px;height:3px;border-radius:2px;background:#56b5ea"></div></div></div>
</body></html>
